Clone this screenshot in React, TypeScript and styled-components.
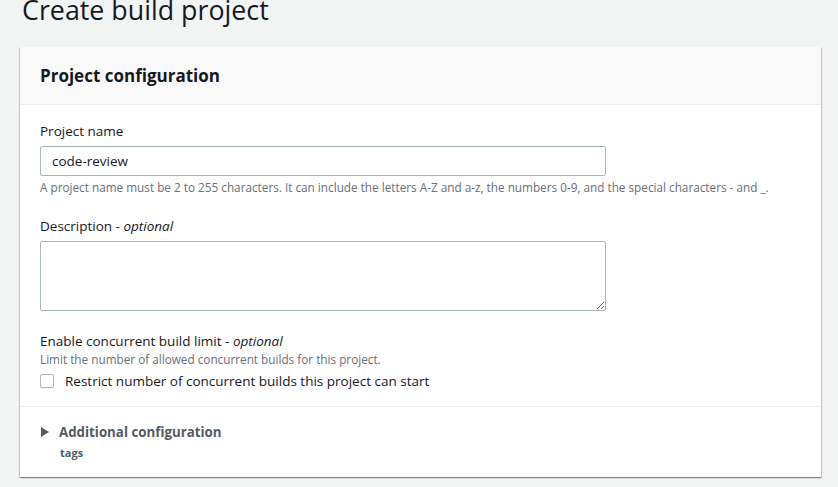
import React from "react";
import styled, { createGlobalStyle } from "styled-components";

const Global = createGlobalStyle`
  html, body { margin: 0; padding: 0; background: #f2f3f3; }
  body { font-family: "Open Sans", "Noto Sans", Arial, sans-serif; color: #16191f; }
  * { box-sizing: border-box; }
`;

const Page = styled.div`
  width: 838px;
  height: 487px;
  overflow: hidden;
  padding: 0 17px 0 20px;
  background: #f2f3f3;
`;

const Title = styled.h1`
  margin: -8px 0 0 2px;
  font-size: 26.8px;
  font-weight: 400;
  line-height: 36px;
  color: #16191f;
`;

const Card = styled.section`
  margin-top: 19px;
  background: #fff;
  box-shadow: 0 1px 1px 0 rgba(0, 28, 36, 0.3), 1px 1px 1px 0 rgba(0, 28, 36, 0.15), -1px 1px 1px 0 rgba(0, 28, 36, 0.15);
`;

const CardHeader = styled.header`
  height: 58px;
  display: flex;
  align-items: center;
  padding: 0 20px;
  background: #fafafa;
  border-bottom: 1px solid #eaeded;
`;

const CardTitle = styled.h2`
  margin: 0;
  font-size: 17px;
  font-weight: 700;
  color: #16191f;
`;

const CardBody = styled.div`
  padding: 16px 20px 15px;
  display: flex;
  flex-direction: column;
  gap: 19px;
`;

const Field = styled.div<{ $top?: number }>`
  display: flex;
  flex-direction: column;
  margin-top: ${(p) => p.$top ?? 0}px;
`;

const Label = styled.label<{ $below?: number }>`
  font-size: 13.5px;
  line-height: 20px;
  margin-bottom: ${(p) => p.$below ?? 5}px;
  color: #16191f;
  em { font-style: italic; }
`;

const Input = styled.input`
  width: 566px;
  height: 30px;
  border: 1px solid #aab7b8;
  border-radius: 2px;
  padding: 0 11px;
  font-family: inherit;
  font-size: 13.5px;
  color: #16191f;
  outline: none;
`;

const TextArea = styled.textarea`
  width: 566px;
  height: 70px;
  border: 1px solid #aab7b8;
  border-radius: 2px;
  padding: 4px 11px;
  font-family: inherit;
  font-size: 14px;
  outline: none;
`;

const Hint = styled.div<{ $gap?: number }>`
  margin-top: ${(p) => p.$gap ?? 0}px;
  font-size: 11.75px;
  line-height: 16px;
  color: #687078;
`;

const CheckRow = styled.label`
  display: flex;
  align-items: center;
  gap: 11px;
  margin-top: 4px;
  font-size: 13.5px;
  line-height: 20px;
`;

const Box = styled.span`
  width: 14px;
  height: 14px;
  border: 1px solid #aab7b8;
  border-radius: 2px;
  background: #fff;
  flex: none;
`;

const Footer = styled.div`
  border-top: 1px solid #eaeded;
  padding: 15px 20px 16px;
`;

const Expand = styled.div`
  display: flex;
  align-items: center;
  gap: 10px;
  font-size: 13.3px;
  font-weight: 700;
  color: #545b64;
  line-height: 20px;
`;

const Caret = styled.svg`
  width: 8px;
  height: 10px;
  margin-left: 1px;
  flex: none;
`;

const Sub = styled.div`
  margin: 3px 0 0 20px;
  font-size: 11px;
  font-weight: 700;
  color: #545b64;
  line-height: 16px;
`;

export default function App() {
  return (
    <Page>
      <Global />
      <Title>Create build project</Title>
      <Card>
        <CardHeader>
          <CardTitle>Project configuration</CardTitle>
        </CardHeader>
        <CardBody>
          <Field>
            <Label>Project name</Label>
            <Input defaultValue="code-review" />
            <Hint $gap={3}>
              A project name must be 2 to 255 characters. It can include the letters A-Z and a-z, the numbers 0-9, and the special characters - and _.
            </Hint>
          </Field>
          <Field $top={2}>
            <Label>
              Description - <em>optional</em>
            </Label>
            <TextArea />
          </Field>
          <Field $top={1}>
            <Label $below={0}>
              Enable concurrent build limit - <em>optional</em>
            </Label>
            <Hint>Limit the number of allowed concurrent builds for this project.</Hint>
            <CheckRow>
              <Box />
              Restrict number of concurrent builds this project can start
            </CheckRow>
          </Field>
        </CardBody>
        <Footer>
          <Expand>
            <Caret viewBox="0 0 8 10">
              <path d="M0 0 L8 5 L0 10 Z" fill="#545b64" />
            </Caret>
            Additional configuration
          </Expand>
          <Sub>tags</Sub>
        </Footer>
      </Card>
    </Page>
  );
}
